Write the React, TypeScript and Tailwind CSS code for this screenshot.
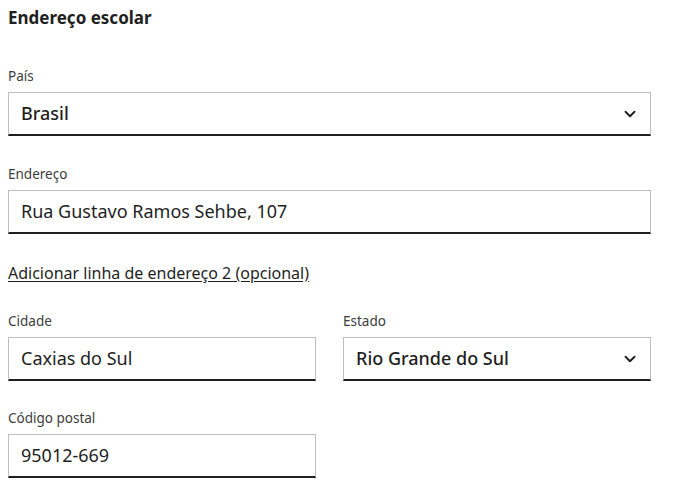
import { ChevronDown } from "lucide-react"

const font = { fontFamily: '"Noto Sans", "Open Sans", sans-serif' }

function Field({ label, value, select }: { label: string; value: string; select?: boolean }) {
  return (
    <div className="flex flex-col">
      <label className="text-[13.5px] leading-4 text-[#3c3c3c] mb-2">{label}</label>
      <div className="h-[44px] flex items-center justify-between border border-[#bfbfbf] border-b-2 border-b-[#1f1f1f] bg-white pl-[12px] pr-[11px]">
        <span className={`text-[18px] text-[#1f1f1f] ${select ? "font-medium" : ""}`}>{value}</span>
        {select && <ChevronDown className="h-[18px] w-[18px] text-[#1f1f1f]" strokeWidth={2.5} />}
      </div>
    </div>
  )
}

export default function App() {
  return (
    <div className="w-[675px] h-[488px] bg-white pl-2 pt-[6px]" style={font}>
      <div className="w-[643px]">
        <h2 className="text-[17px] leading-6 font-bold text-[#1f1f1f]">Endereço escolar</h2>

        <div className="mt-[38px]">
          <Field label="País" value="Brasil" select />
        </div>

        <div className="mt-[30px]">
          <Field label="Endereço" value="Rua Gustavo Ramos Sehbe, 107" />
        </div>

        <div className="mt-[27px]">
          <a href="#" className="text-[16px] leading-5 text-[#1f1f1f] underline underline-offset-2">
            Adicionar linha de endereço 2 (opcional)
          </a>
        </div>

        <div className="mt-[28px] grid grid-cols-2 gap-[27px]">
          <Field label="Cidade" value="Caxias do Sul" />
          <Field label="Estado" value="Rio Grande do Sul" select />
        </div>

        <div className="mt-[29px] grid grid-cols-2 gap-[27px]">
          <Field label="Código postal" value="95012-669" />
        </div>
      </div>
    </div>
  )
}
